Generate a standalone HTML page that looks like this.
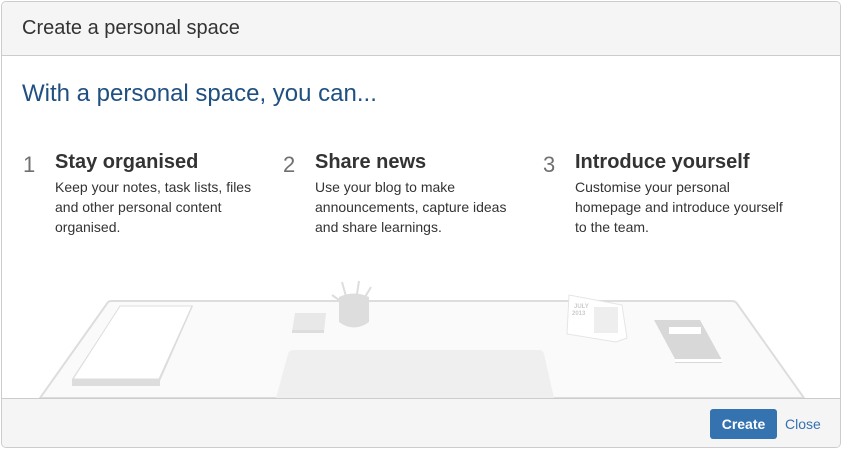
<!DOCTYPE html>
<html><head><style>
*{margin:0;padding:0;box-sizing:border-box}
body{width:842px;height:450px;background:#fff;font-family:"Liberation Sans",Arial,sans-serif;position:relative;overflow:hidden}
.dlg{position:absolute;left:1px;top:1px;width:840px;height:447px;border:1px solid #ccc;border-radius:5px;overflow:hidden;background:#fff}
.hd{position:absolute;left:0;top:0;width:100%;height:54px;background:#f5f5f5;border-bottom:1px solid #ccc}
.hd h1{position:absolute;left:20px;top:15px;font-size:20px;font-weight:normal;color:#333}
.h2{position:absolute;left:20px;top:78px;font-size:24px;color:#205081}
.col{position:absolute;top:150px}
.num{position:absolute;left:0;top:0;font-size:22px;color:#707070}
.t{position:absolute;left:32px;top:-1px;font-size:20px;font-weight:bold;color:#333;white-space:nowrap}
.d{position:absolute;left:32px;top:25px;font-size:14px;line-height:20px;color:#333;white-space:nowrap}
.ft{position:absolute;left:0;top:396px;width:100%;height:51px;background:#f5f5f5;border-top:1px solid #ccc}
.btn{position:absolute;left:708px;top:10px;width:67px;height:30px;background:#3572b0;border-radius:3px;color:#fff;font-weight:bold;font-size:14px;text-align:center;line-height:30px}
.cl{position:absolute;left:783px;top:17px;font-size:14px;color:#3572b0}
svg{position:absolute;left:0;top:0}
</style></head><body>
<div class="dlg">
<svg width="840" height="447">
<path d="M109 299 L730 299 Q734 299 736 303 L802 396 L38 396 L104 303 Q106 299 109 299Z" fill="#fafafa" stroke="#ddd" stroke-width="2"/>
<path d="M286 352 Q287 348 292 348 L537 348 Q541 348 542 352 L552 396 L274 396Z" fill="#efefef"/>
<path d="M70 377 L118 304 L191 304 L158 379 L158 384 L70 384Z" fill="#ddd"/>
<path d="M71 377 L118 304 L190 304 L157 377Z" fill="#fff" stroke="#ddd"/>
<path d="M293 311 L324 311 L322 330 L290 330Z" fill="#e8e8e8"/>
<rect x="290" y="328" width="32" height="3" fill="#ddd"/>
<g stroke="#ddd" stroke-width="2"><line x1="330" y1="293" x2="347" y2="305"/><line x1="340" y1="280" x2="347" y2="305"/><line x1="357" y1="279" x2="353" y2="305"/><line x1="369" y1="285" x2="357" y2="305"/></g>
<path d="M337 295 Q352 288 367 295 L367 320 Q352 331 337 320Z" fill="#ddd"/>
<path d="M567 293 L620 303 L625 336 L614 340 L565 332Z" fill="#fff" stroke="#e5e5e5"/>
<text x="572" y="306" font-size="6" fill="#ccc" font-weight="bold" font-family="Liberation Sans">JULY</text>
<text x="570" y="313" font-size="6" fill="#ccc" font-weight="bold" font-family="Liberation Sans">2013</text>
<rect x="592" y="305" width="24" height="26" fill="#eee"/>
<path d="M652 318 L698 318 L720 358 L720 361 L673 361 L673 357Z" fill="#d8d8d8"/>
<rect x="667" y="325" width="32" height="7" fill="#fff"/>
<rect x="673" y="357" width="47" height="3" fill="#fff"/>
</svg>
<div class="hd"><h1>Create a personal space</h1></div>
<div class="h2">With a personal space, you can...</div>
<div class="col" style="left:21px"><div class="num">1</div><div class="t">Stay organised</div><div class="d">Keep your notes, task lists, files<br>and other personal content<br>organised.</div></div>
<div class="col" style="left:281px"><div class="num">2</div><div class="t">Share news</div><div class="d">Use your blog to make<br>announcements, capture ideas<br>and share learnings.</div></div>
<div class="col" style="left:541px"><div class="num">3</div><div class="t">Introduce yourself</div><div class="d">Customise your personal<br>homepage and introduce yourself<br>to the team.</div></div>
<div class="ft"><div class="btn">Create</div><div class="cl">Close</div></div>
</div>
</body></html>
